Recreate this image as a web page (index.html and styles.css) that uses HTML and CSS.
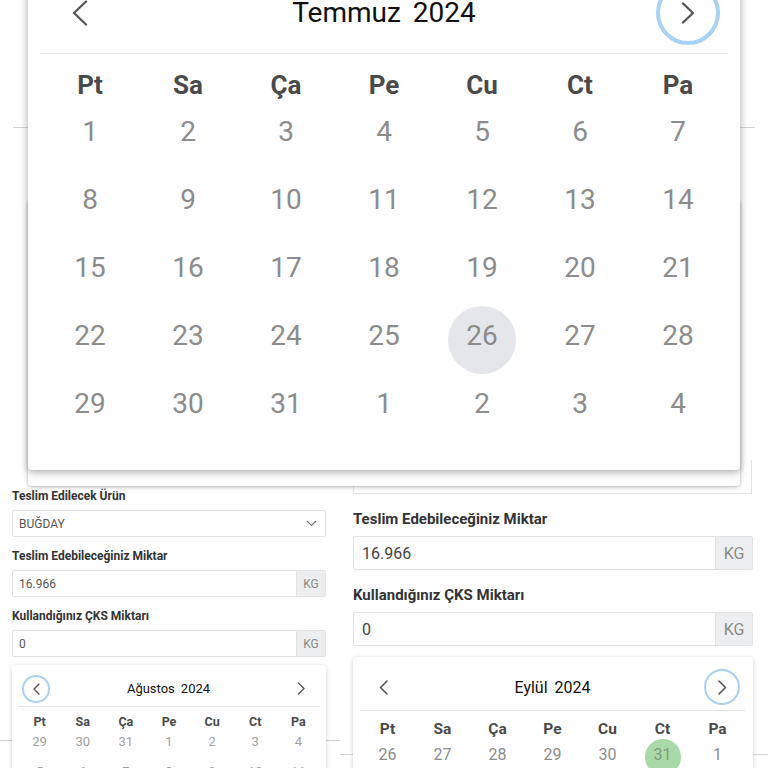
FILE: index.html
```html
<!DOCTYPE html>
<html lang="tr">
<head>
    <meta charset="UTF-8">
    <meta name="viewport" content="width=device-width, initial-scale=1.0">
    <title>Teslimat Formu</title>
    <link rel="stylesheet" href="styles.css">
</head>
<body>
<div class="page">
    <div class="rule rule-top"></div>
    <div class="rule rule-left"></div>
    <div class="rule rule-right"></div>

    <div class="form">
        <div class="col col-sm">
            <div class="label">Teslim Edilecek Ürün</div>
            <div class="field">
                <span class="value">BUĞDAY</span>
                <svg class="caret" width="11" height="7" viewBox="0 0 11 7"><polyline points="1,1 5.5,5.5 10,1"/></svg>
            </div>
            <div class="label">Teslim Edebileceğiniz Miktar</div>
            <div class="field">
                <span class="value">16.966</span>
                <span class="addon">KG</span>
            </div>
            <div class="label">Kullandığınız ÇKS Miktarı</div>
            <div class="field">
                <span class="value">0</span>
                <span class="addon">KG</span>
            </div>

            <div class="cal cal-sm">
                <div class="cal-head">
                    <span class="nav focus">
                        <svg width="7" height="12" viewBox="0 0 7 12"><polyline points="6,1 1,6 6,11"/></svg>
                    </span>
                    <span class="title"><span>Ağustos</span><span>2024</span></span>
                    <span class="nav">
                        <svg width="8" height="13" viewBox="0 0 8 13"><polyline points="1.5,1 7,6.5 1.5,12"/></svg>
                    </span>
                </div>
                <div class="wk">
                    <span>Pt</span><span>Sa</span><span>Ça</span><span>Pe</span><span>Cu</span><span>Ct</span><span>Pa</span>
                </div>
                <div class="days">
                    <div class="d"><span>29</span></div><div class="d"><span>30</span></div><div class="d"><span>31</span></div>
                    <div class="d"><span>1</span></div><div class="d"><span>2</span></div><div class="d"><span>3</span></div><div class="d"><span>4</span></div>
                    <div class="d"><span>5</span></div><div class="d"><span>6</span></div><div class="d"><span>7</span></div>
                    <div class="d"><span>8</span></div><div class="d"><span>9</span></div><div class="d"><span>10</span></div><div class="d"><span>11</span></div>
                </div>
            </div>
        </div>

        <div class="col col-lg">
            <div class="stub"></div>
            <div class="label">Teslim Edebileceğiniz Miktar</div>
            <div class="field">
                <span class="value">16.966</span>
                <span class="addon">KG</span>
            </div>
            <div class="label">Kullandığınız ÇKS Miktarı</div>
            <div class="field">
                <span class="value">0</span>
                <span class="addon">KG</span>
            </div>

            <div class="cal cal-md">
                <div class="cal-head">
                    <span class="nav">
                        <svg width="9" height="15" viewBox="0 0 9 15"><polyline points="8,1 1.5,7.5 8,14"/></svg>
                    </span>
                    <span class="title"><span>Eylül</span><span>2024</span></span>
                    <span class="nav focus">
                        <svg width="9" height="15" viewBox="0 0 9 15"><polyline points="1,1 7.5,7.5 1,14"/></svg>
                    </span>
                </div>
                <div class="wk">
                    <span>Pt</span><span>Sa</span><span>Ça</span><span>Pe</span><span>Cu</span><span>Ct</span><span>Pa</span>
                </div>
                <div class="days">
                    <div class="d"><span>26</span></div><div class="d"><span>27</span></div><div class="d"><span>28</span></div>
                    <div class="d"><span>29</span></div><div class="d"><span>30</span></div><div class="d"><span class="today">31</span></div><div class="d"><span>1</span></div>
                    <div class="d"><span>2</span></div><div class="d"><span>3</span></div><div class="d"><span>4</span></div>
                    <div class="d"><span>5</span></div><div class="d"><span>6</span></div><div class="d"><span>7</span></div><div class="d"><span>8</span></div>
                </div>
            </div>
        </div>
    </div>

    <div class="picker-under"></div>

    <div class="cal cal-lg">
        <div class="cal-head">
            <span class="nav">
                <svg width="16" height="26" viewBox="0 0 16 26"><polyline points="14,1.5 2,13 14,24.5"/></svg>
            </span>
            <span class="title"><span>Temmuz</span><span>2024</span></span>
            <span class="nav focus">
                <svg width="14" height="22" viewBox="0 0 14 22"><polyline points="2,1.5 12,11 2,20.5"/></svg>
            </span>
        </div>
        <div class="wk">
            <span>Pt</span><span>Sa</span><span>Ça</span><span>Pe</span><span>Cu</span><span>Ct</span><span>Pa</span>
        </div>
        <div class="days">
            <div class="d"><span>1</span></div><div class="d"><span>2</span></div><div class="d"><span>3</span></div><div class="d"><span>4</span></div>
            <div class="d"><span>5</span></div><div class="d"><span>6</span></div><div class="d"><span>7</span></div>
            <div class="d"><span>8</span></div><div class="d"><span>9</span></div><div class="d"><span>10</span></div><div class="d"><span>11</span></div>
            <div class="d"><span>12</span></div><div class="d"><span>13</span></div><div class="d"><span>14</span></div>
            <div class="d"><span>15</span></div><div class="d"><span>16</span></div><div class="d"><span>17</span></div><div class="d"><span>18</span></div>
            <div class="d"><span>19</span></div><div class="d"><span>20</span></div><div class="d"><span>21</span></div>
            <div class="d"><span>22</span></div><div class="d"><span>23</span></div><div class="d"><span>24</span></div><div class="d"><span>25</span></div>
            <div class="d"><span class="selected">26</span></div><div class="d"><span>27</span></div><div class="d"><span>28</span></div>
            <div class="d"><span>29</span></div><div class="d"><span>30</span></div><div class="d"><span>31</span></div><div class="d"><span>1</span></div>
            <div class="d"><span>2</span></div><div class="d"><span>3</span></div><div class="d"><span>4</span></div>
        </div>
    </div>
</div>
</body>
</html>
```

FILE: styles.css
```css
body {
    margin: 0;
    background: #ffffff;
    font-family: Roboto, "Noto Sans", Arial, sans-serif;
    color: #333;
}
.page {
    position: relative;
    height: 768px;
    overflow: hidden;
}

/* lines of the page behind the pickers */
.rule {
    position: absolute;
    height: 1px;
    background: #d2d2d2;
}
.rule-top {
    top: 127px;
    left: 13px;
    width: 742px;
}
.rule-left {
    top: 740px;
    left: 0;
    width: 340px;
}
.rule-right {
    top: 754px;
    left: 340px;
    width: 428px;
}

/* form */
.form {
    display: grid;
    grid-template-columns: 314px 400px;
    column-gap: 27px;
    align-items: start;
    padding: 460px 0 0 12px;
}
.col {
    display: flex;
    flex-direction: column;
}
.col-sm {
    padding-top: 29px;
}
.label {
    font-weight: bold;
    color: #333;
}
.col-sm .label {
    font-size: 12px;
    line-height: 14px;
    margin: 12px 0 7px;
}
.col-sm .label:first-child {
    margin-top: 0;
}
.col-lg .label {
    font-size: 15px;
    line-height: 18px;
    margin: 16px 0 8px;
}
.field {
    display: flex;
    align-items: stretch;
    box-sizing: border-box;
    border: 1px solid #e2e2e2;
    border-radius: 2px;
    background: #fff;
}
.col-sm .field {
    height: 27px;
    font-size: 12px;
}
.col-lg .field {
    height: 34px;
    font-size: 16px;
}
.value {
    flex: 1;
    display: flex;
    align-items: center;
    color: #555;
}
.col-sm .value {
    padding: 0 6px;
}
.col-lg .value {
    padding: 0 8px;
    color: #444;
}
.addon {
    display: flex;
    align-items: center;
    justify-content: center;
    background: #eceeef;
    border-left: 1px solid #e2e2e2;
    color: #8a8a8a;
}
.col-sm .addon {
    width: 28px;
}
.col-lg .addon {
    width: 36px;
}
.caret {
    align-self: center;
    margin-right: 8px;
    fill: none;
    stroke: #777;
    stroke-width: 1.2;
}
.stub {
    height: 34px;
    box-sizing: border-box;
    border: 1px solid #e3e3e3;
    border-top: none;
    margin-right: 1px;
}

/* calendars */
.cal {
    background: #fff;
    border-radius: 4px;
}
.cal-head {
    display: flex;
    align-items: center;
    box-sizing: border-box;
    border-bottom: 1px solid #e4e4e4;
}
.nav {
    display: flex;
    align-items: center;
    justify-content: center;
    border-radius: 50%;
    box-sizing: border-box;
}
.nav svg {
    fill: none;
    stroke: #555;
    stroke-linecap: round;
    stroke-linejoin: round;
}
.nav.focus {
    border: 2px solid #a9d0f5;
}
.title {
    flex: 1;
    display: flex;
    justify-content: center;
    color: #111;
}
.wk {
    display: grid;
    grid-template-columns: repeat(7, 1fr);
    align-items: center;
    box-sizing: border-box;
    text-align: center;
    font-weight: bold;
    color: #4a4a4a;
}
.days {
    display: grid;
    grid-template-columns: repeat(7, 1fr);
}
.d {
    display: flex;
    justify-content: center;
}
.d span {
    display: flex;
    align-items: center;
    justify-content: center;
    box-sizing: border-box;
    border-radius: 50%;
    color: #8c8c8c;
}
.d .selected {
    background: #e4e6ea;
}
.d .today {
    background: #a9d9a9;
    color: #7f9a7f;
}

/* big picker on top */
.picker-under {
    position: absolute;
    left: 28px;
    top: 200px;
    width: 712px;
    height: 286px;
    background: #fff;
    border-radius: 4px;
    box-shadow: 0 1px 4px rgba(0, 0, 0, 0.3);
}
.cal-lg {
    position: absolute;
    top: -28px;
    left: 28px;
    width: 712px;
    padding: 0 13px 28px;
    box-sizing: border-box;
    box-shadow: 0 2px 8px rgba(0, 0, 0, 0.35);
}
.cal-lg .cal-head {
    height: 82px;
    margin: 0 -1px;
    padding: 0 8px;
}
.cal-lg .nav {
    width: 64px;
    height: 64px;
}
.cal-lg .nav svg {
    stroke-width: 2.3;
}
.cal-lg .nav.focus {
    border-width: 4px;
}
.cal-lg .title {
    font-size: 28px;
    gap: 12px;
}
.cal-lg .wk {
    height: 48px;
    padding-top: 14px;
    font-size: 26px;
}
.cal-lg .d span {
    width: 68px;
    height: 68px;
    padding-bottom: 9px;
    font-size: 28px;
}

/* small pickers */
.cal-sm,
.cal-md {
    position: relative;
    overflow: hidden;
    box-shadow: 0 1px 5px rgba(0, 0, 0, 0.18);
}
.cal-sm {
    margin-top: 8px;
    height: 120px;
    padding: 0 6px;
}
.cal-sm .cal-head {
    height: 42px;
    padding: 10px 5px 4px 4px;
}
.cal-sm .nav {
    width: 28px;
    height: 28px;
}
.cal-sm .nav svg {
    stroke-width: 1.4;
}
.cal-sm .title {
    font-size: 13px;
    gap: 6px;
}
.cal-sm .wk {
    height: 21px;
    padding-top: 7px;
    font-size: 12.5px;
}
.cal-sm .d span {
    width: 30px;
    height: 30px;
    padding-bottom: 4px;
    font-size: 13px;
    color: #a0a0a0;
}
.cal-md {
    margin-top: 11px;
    height: 130px;
    padding: 0 8px 0 7px;
}
.cal-md .cal-head {
    height: 54px;
    padding: 12px 5px 5px 5px;
}
.cal-md .nav {
    width: 36px;
    height: 36px;
}
.cal-md .nav svg {
    stroke-width: 1.6;
}
.cal-md .nav.focus {
    border-width: 2.5px;
}
.cal-md .title {
    font-size: 16px;
    gap: 7px;
}
.cal-md .wk {
    height: 28px;
    padding-top: 8px;
    font-size: 15.5px;
}
.cal-md .d span {
    width: 36px;
    height: 36px;
    padding-bottom: 6px;
    font-size: 16px;
}
```
